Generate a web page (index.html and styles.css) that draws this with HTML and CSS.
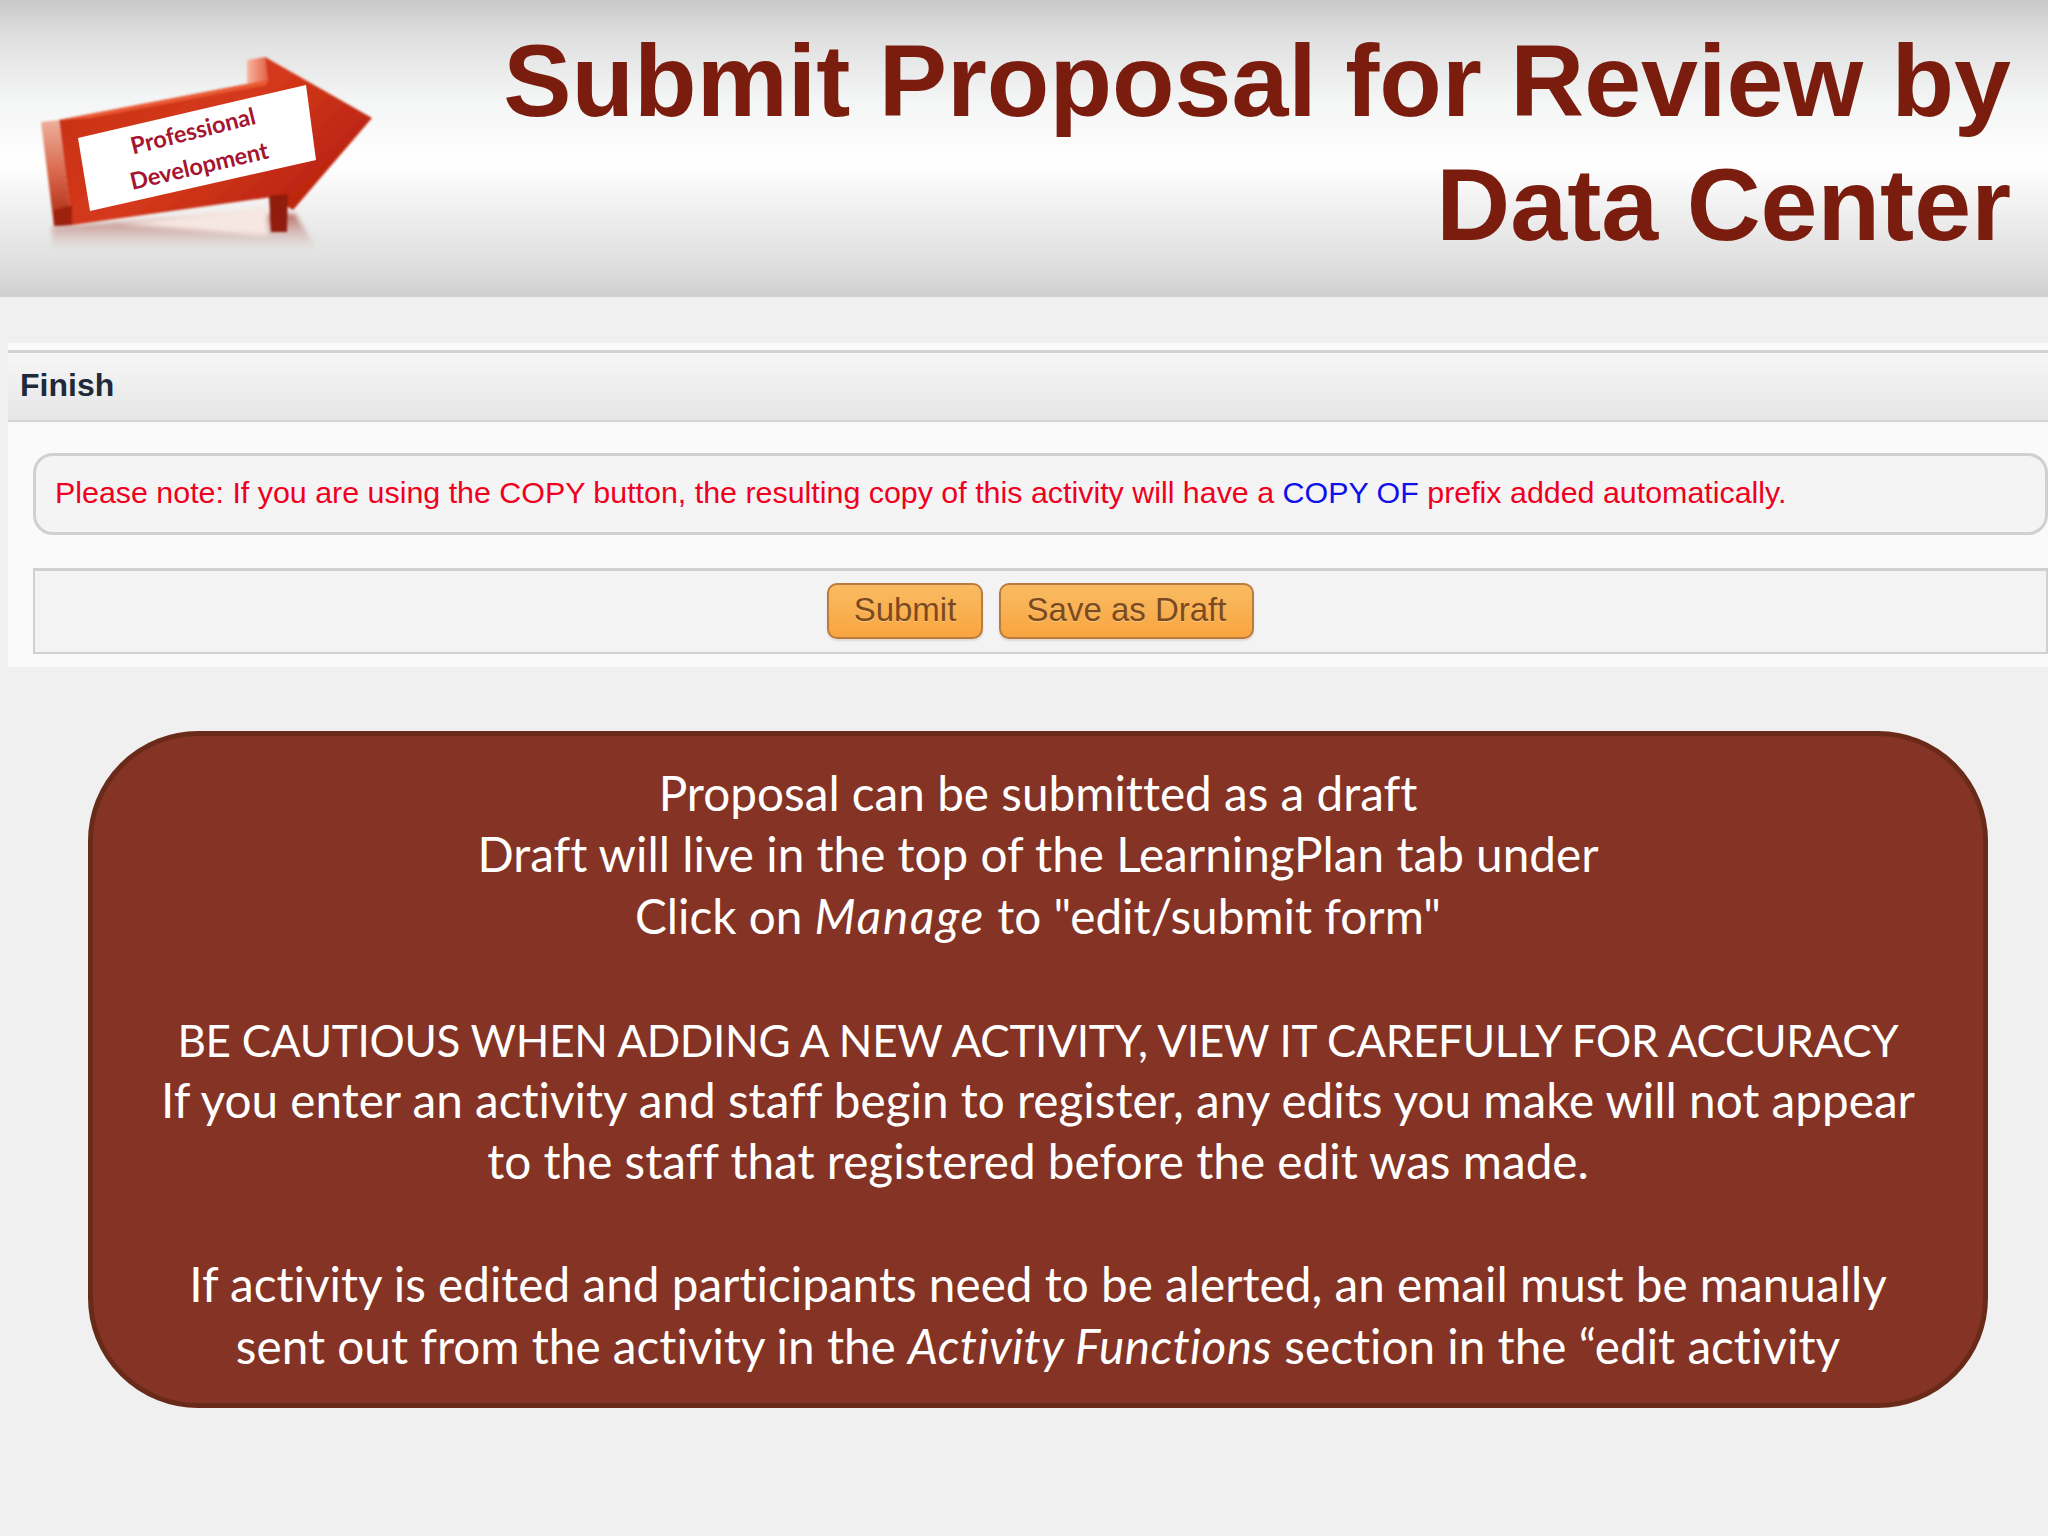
FILE: index.html
```html
<!DOCTYPE html>
<html lang="en">
<head>
<meta charset="utf-8">
<title>Submit Proposal for Review by Data Center</title>
<link rel="stylesheet" href="styles.css">
</head>
<body>
<header class="banner">
  <svg class="logo" viewBox="0 0 500 297" width="500" height="297" aria-label="Professional Development">
    <defs>
      <filter id="soft"><feGaussianBlur stdDeviation="1"/></filter>
      <filter id="softer"><feGaussianBlur stdDeviation="2.5"/></filter>
      <linearGradient id="face" x1="0" y1="0" x2="1" y2="0.6">
        <stop offset="0" stop-color="#c42f16"/>
        <stop offset="0.55" stop-color="#d5391b"/>
        <stop offset="1" stop-color="#b8220f"/>
      </linearGradient>
      <linearGradient id="side" x1="0" y1="0" x2="0" y2="1">
        <stop offset="0" stop-color="#eeb09c"/>
        <stop offset="0.5" stop-color="#d9674b"/>
        <stop offset="1" stop-color="#a82410"/>
      </linearGradient>
      <linearGradient id="back" x1="0" y1="0" x2="1" y2="0">
        <stop offset="0" stop-color="#f6b8a2"/>
        <stop offset="1" stop-color="#e4583a"/>
      </linearGradient>
      <linearGradient id="reflect" x1="0" y1="0" x2="0" y2="1">
        <stop offset="0" stop-color="#a8493a" stop-opacity="0.8"/>
        <stop offset="1" stop-color="#c9a8a4" stop-opacity="0.1"/>
      </linearGradient>
    </defs>
    <g filter="url(#softer)">
      <polygon points="52,226 272,214 295,214 316,247 52,247" fill="url(#reflect)"/>
    </g>
    <polygon points="120,224 268,206 268,236" fill="#f6e7e2" filter="url(#softer)"/>
    <g filter="url(#soft)">
      <polygon points="41,122 59,120 72,225 54,226" fill="url(#side)"/>
      <polygon points="247,60 266,57 270,82 247,85" fill="url(#back)"/>
      <polygon points="59,120 268,80 265,57 372,118 293,210 272,197 72,225" fill="url(#face)"/>
      <polygon points="59,120 268,80 266,85 90,118" fill="#ea5a35"/>
      <polygon points="269,196 288,194 287,232 271,232" fill="#8f1e0c"/>
      <polygon points="54,210 72,205 72,225 54,226" fill="#9c200e"/>
    </g>
    <polygon class="sign" points="78,138 306,85 316,160 90,211"/>
    <text class="sign-text" transform="translate(195 139) rotate(-14)">Professional</text>
    <text class="sign-text" transform="translate(201 174) rotate(-13)">Development</text>
  </svg>
  <h1 class="title">Submit Proposal for Review by<br>Data Center</h1>
</header>

<main>
  <section class="panel">
    <h2 class="panel-head">Finish</h2>
    <div class="panel-body">
      <p class="note">Please note: If you are using the COPY button, the resulting copy of this activity will have a <span class="note-key">COPY OF</span> prefix added automatically.</p>
      <div class="actions">
        <button class="btn btn-submit" type="button">Submit</button>
        <button class="btn btn-draft" type="button">Save as Draft</button>
      </div>
    </div>
  </section>

  <section class="callout">
    <p>Proposal can be submitted as a draft<br>Draft will live in the top of the LearningPlan tab under<br>Click on <em class="em-manage">Manage</em> to "edit/submit form"</p>
    <p><span class="caps">BE CAUTIOUS WHEN ADDING A NEW ACTIVITY, VIEW IT CAREFULLY FOR ACCURACY</span><br>If you enter an activity and staff begin to register, any edits you make will not appear<br>to the staff that registered before the edit was made.</p>
    <p>If activity is edited and participants need to be alerted, an email must be manually<br>sent out from the activity in the <em class="em-functions">Activity Functions</em> section in the “edit activity</p>
  </section>
</main>
</body>
</html>
```
FILE: styles.css
```css
* { box-sizing: border-box; }

html, body {
  margin: 0;
  height: 1536px;
  overflow: hidden;
}

body {
  background: #f0f0f0;
  font-family: "Liberation Sans", Arial, sans-serif;
}

.banner {
  height: 297px;
  display: flex;
  justify-content: space-between;
  align-items: flex-start;
  background: linear-gradient(#c8c8c8 0, #dedede 11%, #f4f5f5 34%, #ffffff 56%, #f3f3f3 67%, #dedede 90%, #cfcfcf 100%);
}

.logo { flex: none; display: block; }

.sign { fill: #ffffff; }

.sign-text {
  font-family: Lato, sans-serif;
  font-weight: 700;
  font-size: 23.5px;
  fill: #a51530;
  text-anchor: middle;
}

.title {
  margin: 19px 37px 0 0;
  text-align: right;
  color: #7a1c0e;
  font-size: 102.4px;
  line-height: 124px;
  font-weight: 700;
}

.panel {
  margin: 46px 0 0 8px;
  padding-top: 7px;
  background: #fbfafb;
  height: 324px;
}

.panel-head {
  margin: 0;
  height: 72px;
  padding-left: 12px;
  border-top: 3px solid #d2d2d4;
  border-bottom: 2px solid #d4d4d6;
  background: linear-gradient(#f6f6f7, #e6e6e7);
  color: #1e2a3a;
  font-size: 32px;
  line-height: 64px;
  font-weight: 700;
}

.panel-body { padding: 31px 0 0 25px; }

.note {
  margin: 0;
  height: 82px;
  padding-left: 19px;
  border: 3px solid #d0d0d4;
  border-radius: 20px;
  background: #f4f4f5;
  color: #f00020;
  font-size: 30.4px;
  line-height: 73px;
  white-space: nowrap;
}

.note-key { color: #1010e8; }

.actions {
  margin-top: 33px;
  height: 86px;
  display: flex;
  justify-content: center;
  align-items: flex-start;
  gap: 16px;
  padding-top: 12px;
  border: 2px solid #d0d0d2;
  border-top-width: 3px;
  background: #f3f3f4;
}

.btn {
  height: 56px;
  padding: 0 0 3px;
  border: 2px solid #b97b3e;
  border-radius: 10px;
  background: linear-gradient(#f9bb62, #f9a540);
  box-shadow: 0 2px 2px rgba(190, 170, 150, 0.35);
  color: #7c4a1c;
  font-family: "Liberation Sans", Arial, sans-serif;
  font-size: 33px;
  text-align: center;
  text-shadow: 0 1px 0 rgba(255, 235, 200, 0.45);
}

.btn-submit { width: 156px; }
.btn-draft { width: 255px; }

.callout {
  margin: 64px 0 0 88px;
  width: 1900px;
  height: 677px;
  padding-top: 26px;
  border: 5px solid #6a2a1a;
  border-radius: 110px;
  background: #843324;
  color: #ffffff;
  font-family: Lato, sans-serif;
  font-size: 47.7px;
  font-variant-ligatures: none;
  line-height: 61.4px;
  text-align: center;
}

.callout p { margin: 0 0 61.4px; }

.caps {
  font-size: 44px;
  letter-spacing: -0.27px;
  line-height: 0;
}

.em-manage { letter-spacing: 1.8px; }
.em-functions { letter-spacing: 0.5px; }
```
